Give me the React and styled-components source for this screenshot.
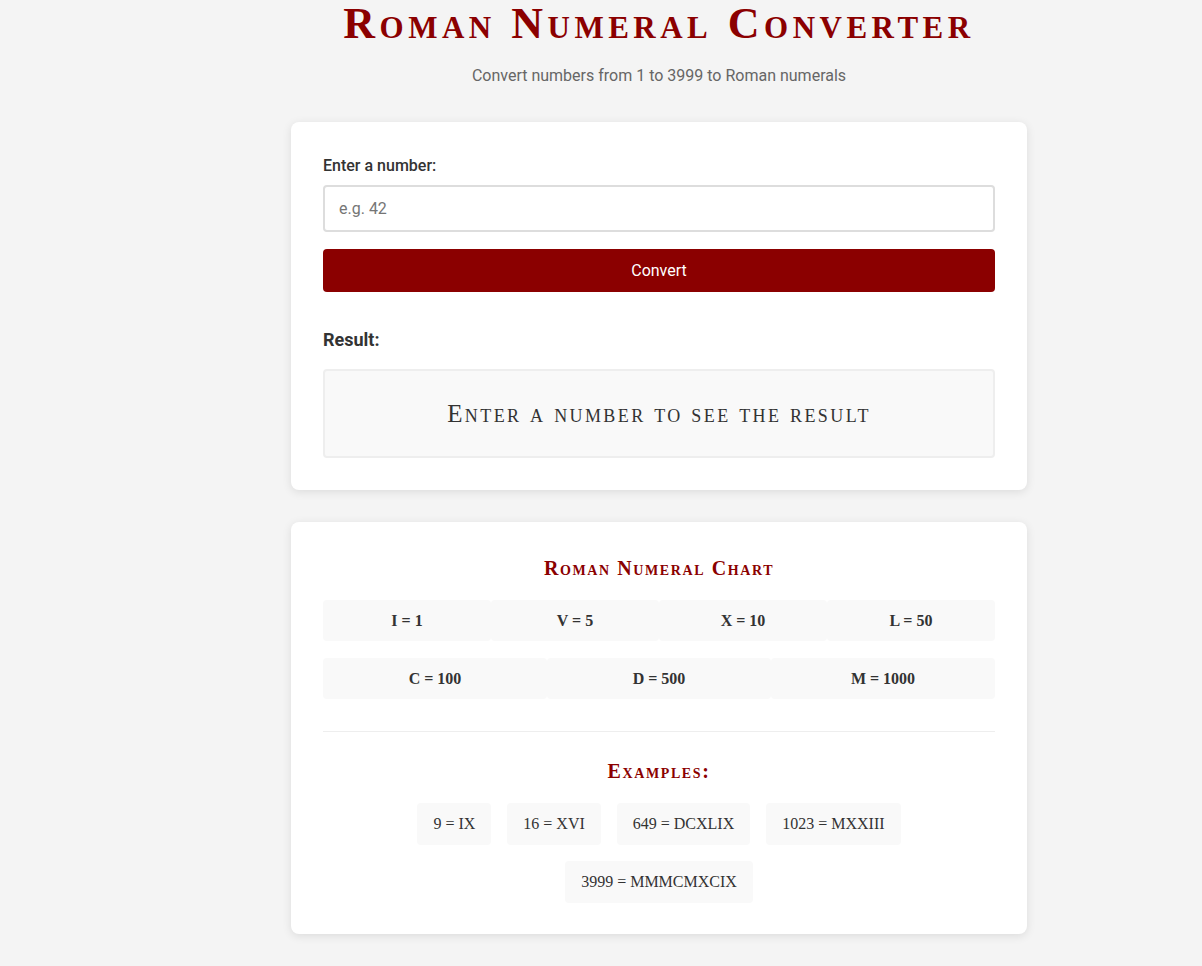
import React from 'react';
import styled, { createGlobalStyle } from 'styled-components';

const GlobalStyle = createGlobalStyle`
  body {
    margin: 0;
    background: #f4f4f4;
    font-family: Roboto, 'Liberation Sans', sans-serif;
    color: #333;
  }
`;

const chart = [
  ['I = 1', 'V = 5', 'X = 10', 'L = 50'],
  ['C = 100', 'D = 500', 'M = 1000'],
];

const examples = ['9 = IX', '16 = XVI', '649 = DCXLIX', '1023 = MXXIII', '3999 = MMMCMXCIX'];

const App = () => {
  return (
    <>
      <GlobalStyle />
      <Page>
        <Header>
          <Title>Roman Numeral Converter</Title>
          <Subtitle>Convert numbers from 1 to 3999 to Roman numerals</Subtitle>
        </Header>

        <Card>
          <Label htmlFor='number'>Enter a number:</Label>
          <Input id='number' type='number' placeholder='e.g. 42' />
          <Button>Convert</Button>
          <ResultLabel>Result:</ResultLabel>
          <ResultBox>Enter a number to see the result</ResultBox>
        </Card>

        <Card>
          <SectionTitle>Roman Numeral Chart</SectionTitle>
          {chart.map((row, i) => (
            <ChartRow key={i}>
              {row.map((item) => (
                <ChartItem key={item}>{item}</ChartItem>
              ))}
            </ChartRow>
          ))}
          <Divider />
          <SectionTitle>Examples:</SectionTitle>
          <ExampleList>
            {examples.map((ex) => (
              <Example key={ex}>{ex}</Example>
            ))}
          </ExampleList>
        </Card>
      </Page>
    </>
  );
};

export default App;

const Page = styled.div`
  width: 736px;
  margin-left: 291px;
  padding-bottom: 30px;
  display: flex;
  flex-direction: column;
  gap: 32px;
`;

const Header = styled.header`
  text-align: center;
  margin-bottom: 5px;
`;

const Title = styled.h1`
  margin: 0;
  padding-top: 2px;
  font-family: 'Liberation Serif', serif;
  font-variant: small-caps;
  font-weight: 700;
  font-size: 44px;
  line-height: 44px;
  letter-spacing: 4.5px;
  color: #8b0000;
`;

const Subtitle = styled.p`
  margin: 20px 0 0;
  font-size: 16px;
  color: #666;
`;

const Card = styled.section`
  background: #fff;
  border-radius: 8px;
  box-shadow: 0 2px 10px rgba(0, 0, 0, 0.1);
  padding: 32px;
`;

const Label = styled.label`
  display: block;
  margin-top: 2px;
  margin-bottom: 10px;
  font-size: 16px;
  font-weight: 500;
  color: #333;
`;

const Input = styled.input`
  display: block;
  box-sizing: border-box;
  width: 100%;
  height: 47px;
  padding: 0 14px;
  border: 2px solid #ddd;
  border-radius: 4px;
  font-family: Roboto, sans-serif;
  font-size: 16px;
  color: #333;
  outline: none;
  &::placeholder {
    color: #757575;
  }
`;

const Button = styled.button`
  display: block;
  width: 100%;
  height: 43px;
  margin-top: 17px;
  border: none;
  border-radius: 4px;
  background: #8b0000;
  color: #fff;
  font-family: Roboto, sans-serif;
  font-size: 16px;
  cursor: pointer;
`;

const ResultLabel = styled.h3`
  margin: 37px 0 19px;
  font-size: 18px;
  font-weight: 700;
  color: #333;
`;

const ResultBox = styled.div`
  box-sizing: border-box;
  height: 89px;
  display: flex;
  align-items: center;
  justify-content: center;
  background: #f9f9f9;
  border: 2px solid #eee;
  border-radius: 4px;
  font-family: 'Liberation Serif', serif;
  font-variant: small-caps;
  font-size: 25px;
  letter-spacing: 2.4px;
  color: #333;
`;

const SectionTitle = styled.h3`
  margin: 3px 0 20px;
  text-align: center;
  font-family: 'Liberation Serif', serif;
  font-variant: small-caps;
  font-weight: 700;
  font-size: 20px;
  letter-spacing: 1.6px;
  color: #8b0000;
`;

const ChartRow = styled.div`
  display: flex;
  margin-bottom: 17px;
`;

const ChartItem = styled.div`
  flex: 1;
  height: 41px;
  display: flex;
  align-items: center;
  justify-content: center;
  background: #f9f9f9;
  border-radius: 4px;
  font-family: 'Liberation Serif', serif;
  font-weight: 700;
  font-size: 16px;
  color: #333;
`;

const Divider = styled.hr`
  margin: 32px 0 28px;
  border: none;
  border-top: 1px solid #eee;
`;

const ExampleList = styled.div`
  display: flex;
  flex-wrap: wrap;
  justify-content: center;
  gap: 16px;
  padding: 0 80px;
  margin-bottom: -1px;
`;

const Example = styled.div`
  height: 42px;
  padding: 0 16px;
  display: flex;
  align-items: center;
  background: #f9f9f9;
  border-radius: 4px;
  font-family: 'Liberation Serif', serif;
  font-size: 16px;
  color: #333;
`;
